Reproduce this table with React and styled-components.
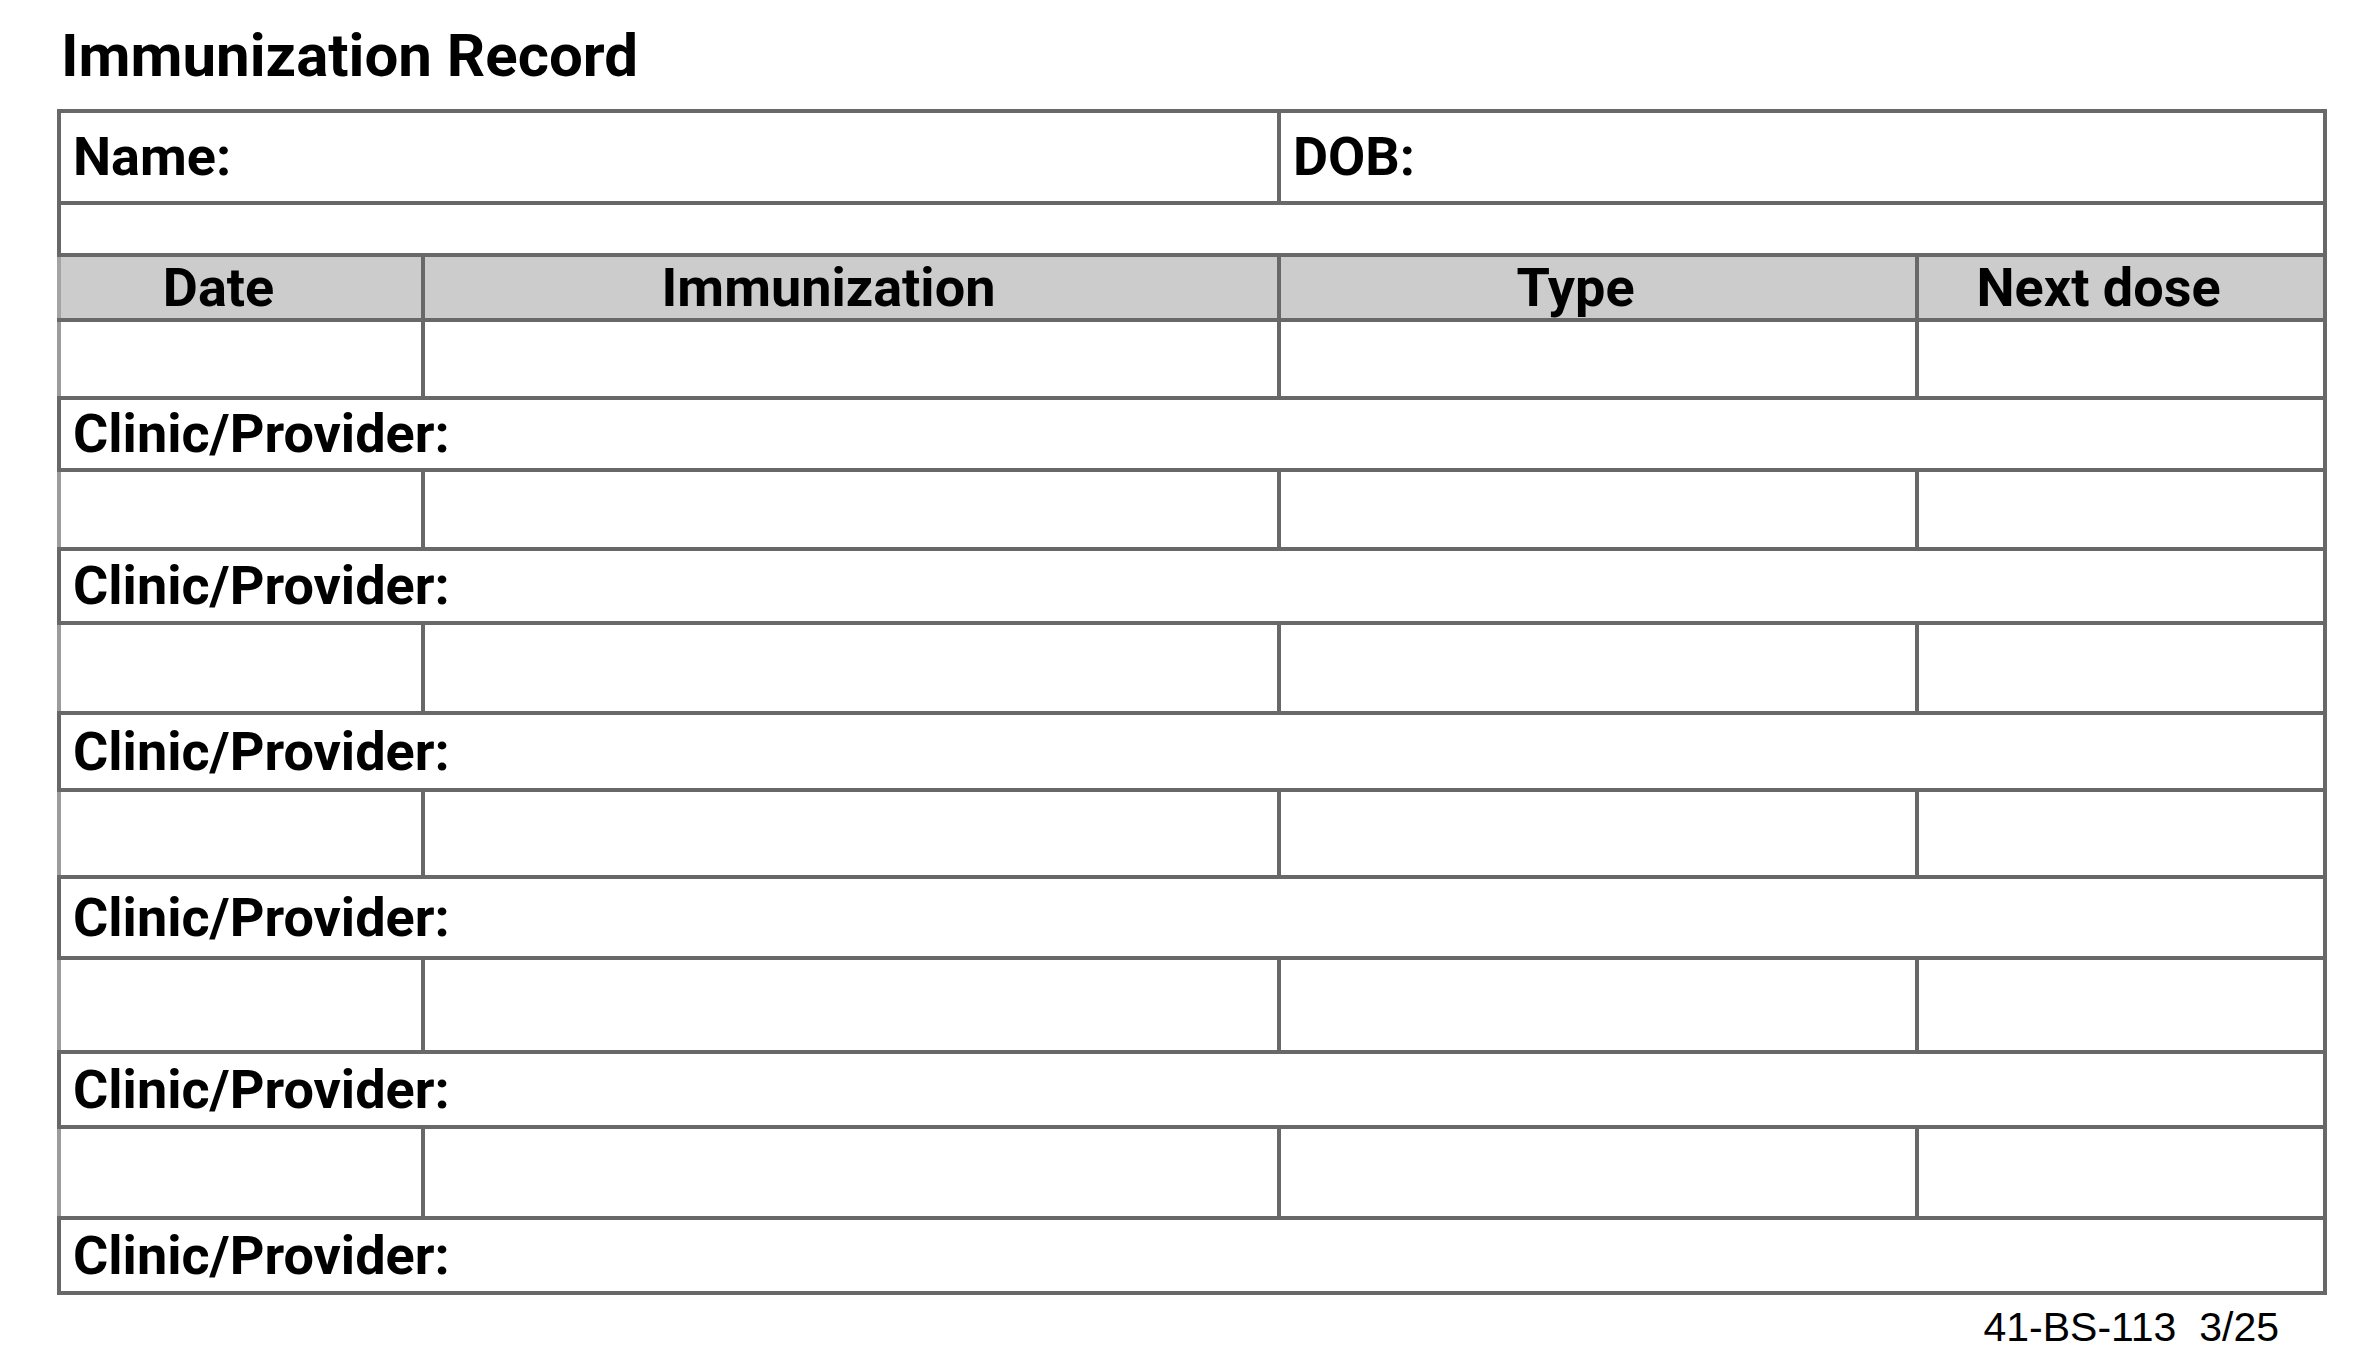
import React from 'react'
import styled, { createGlobalStyle } from 'styled-components'

const GlobalStyle = createGlobalStyle`
    html, body {
        margin: 0;
        padding: 0;
        background: #fff;
    }
    body {
        font-family: Roboto, "Liberation Sans", sans-serif;
        color: #000;
    }
`

const LINE = '#686868'
const FOUR_COLS = '360px 852px 634px 404px'
const TWO_COLS = '1216px 1042px'

const Page = styled.div`
    width: 2354px;
    min-height: 1362px;
    padding: 26px 0 0 57px;
    box-sizing: border-box;
`

const Title = styled.h1`
    margin: 0 0 23px 4px;
    font: 700 60px/1 Roboto, sans-serif;
    color: #000;
`

const Sheet = styled.div`
    width: 2270px;
    box-sizing: border-box;
    background: ${LINE};
    padding: 4px;
    display: flex;
    flex-direction: column;
    gap: 4px;
`

const Row = styled.div`
    display: grid;
    grid-template-columns: ${p => p.$cols};
    gap: 4px;
    height: ${p => p.$h}px;
`

const Cell = styled.div`
    background: #fff;
    display: flex;
    align-items: center;
    padding-left: 12px;
    font: 700 54px/1 Roboto, sans-serif;
    box-shadow: ${p => (p.$soft ? '-4px 0 0 #9c9c9c' : 'none')};
`

const HeadCell = styled.div`
    background: #cccccc;
    display: flex;
    align-items: center;
    justify-content: center;
    padding-right: 45px;
    font: 700 54px/1 Roboto, sans-serif;
    box-shadow: ${p => (p.$soft ? '-4px 0 0 #a4a4a4' : 'none')};
`

const Footer = styled.div`
    width: 2270px;
    box-sizing: border-box;
    display: flex;
    justify-content: flex-end;
    padding-right: 48px;
    margin-top: 12px;
    font: 400 41px/1 "Liberation Sans", Arial, sans-serif;
    white-space: pre;
`

const columns = ['Date', 'Immunization', 'Type', 'Next dose']

// [data row height, clinic row height]
const entries = [
    [74, 68],
    [75, 70],
    [86, 73],
    [83, 77],
    [90, 71],
    [87, 71]
]

export default function App() {
    return (
        <Page>
            <GlobalStyle />
            <Title>Immunization Record</Title>
            <Sheet>
                <Row $cols={TWO_COLS} $h={88}>
                    <Cell>Name:</Cell>
                    <Cell>DOB:</Cell>
                </Row>
                <Row $cols="1fr" $h={48}>
                    <Cell />
                </Row>
                <Row $cols={FOUR_COLS} $h={61}>
                    {columns.map((c, i) => (
                        <HeadCell key={c} $soft={i === 0}>{c}</HeadCell>
                    ))}
                </Row>
                {entries.map(([dataH, clinicH], n) => (
                    <React.Fragment key={n}>
                        <Row $cols={FOUR_COLS} $h={dataH}>
                            {columns.map((c, i) => (
                                <Cell key={c} $soft={i === 0} />
                            ))}
                        </Row>
                        <Row $cols="1fr" $h={clinicH}>
                            <Cell>Clinic/Provider:</Cell>
                        </Row>
                    </React.Fragment>
                ))}
            </Sheet>
            <Footer>41-BS-113  3/25</Footer>
        </Page>
    )
}
